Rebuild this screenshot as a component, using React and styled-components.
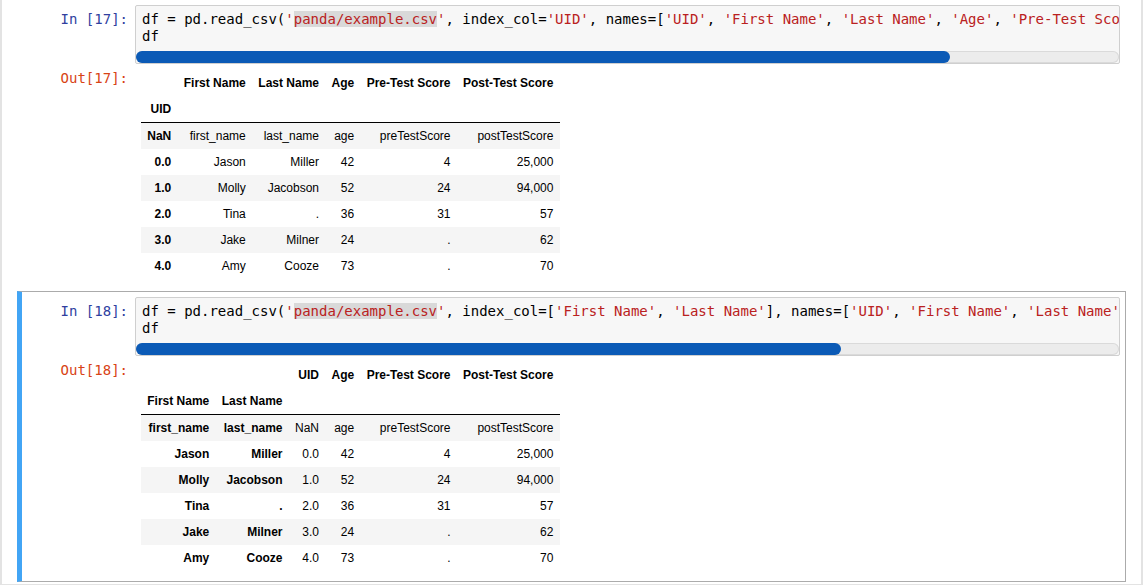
import React from 'react';
import styled, { createGlobalStyle } from 'styled-components';

const GlobalStyle = createGlobalStyle`
  html, body {
    margin: 0;
    padding: 0;
    background: #e3e3e3;
    overflow: hidden;
  }
`;

const Notebook = styled.div`
  margin-left: 2px;
  width: 1139px;
  min-height: 100vh;
  background: #fff;
  padding: 0 15px;
  box-sizing: border-box;
`;

const Cell = styled.div`
  border: 1px solid ${(props) => (props.selected ? '#ababab' : 'transparent')};
  border-left: 5px solid ${(props) => (props.selected ? '#42a5f5' : 'transparent')};
  padding: 5px;
  margin-top: ${(props) => (props.first ? '-1px' : '1px')};
`;

const Row = styled.div`
  display: flex;
  align-items: flex-start;
`;

const Prompt = styled.div`
  flex: 0 0 108px;
  box-sizing: border-box;
  padding: 6px 7px 0 0;
  text-align: right;
  font-family: "DejaVu Sans Mono", monospace;
  font-size: 14px;
  line-height: 17px;
  color: ${(props) => (props.out ? '#d84315' : '#303f9f')};
  white-space: pre;
`;

const CodeBox = styled.div`
  flex: 1;
  min-width: 0;
  border: 1px solid #cfcfcf;
  border-radius: 2px;
  background: #f7f7f7;
  overflow: hidden;
`;

const CodeLines = styled.div`
  padding: 5px 6px 6px 6px;
  font-family: "DejaVu Sans Mono", monospace;
  font-size: 14px;
  line-height: 17px;
  color: #000;
  white-space: pre;
`;

const Str = styled.span`
  color: #ba2121;
  background: ${(props) => (props.hl ? '#d9d9d9' : 'transparent')};
`;

const Track = styled.div`
  height: 12px;
  background: #ececec;
  border-radius: 6px;
  box-shadow: inset 0 0 0 1px #dadada;
`;

const Thumb = styled.div`
  height: 100%;
  background: #0b5ab6;
  border-radius: 6px;
`;

const OutArea = styled.div`
  flex: 1;
  padding: 6px 0 5px 6px;
`;

const Table = styled.table`
  border-collapse: collapse;
  border-spacing: 0;
  font-family: "Liberation Sans", Arial, sans-serif;
  font-size: 12px;
  color: #000;

  thead {
    border-bottom: 1px solid #000;
  }
  tbody tr:nth-child(odd) {
    background: #f5f5f5;
  }
  th, td {
    padding: 6px 6.25px;
    text-align: right;
    vertical-align: middle;
    line-height: normal;
    white-space: nowrap;
  }
  th {
    font-weight: bold;
  }
  td {
    font-weight: normal;
  }
`;

const renderCode = (line) =>
  line.split(/('[^']*')/).map((part, i) => {
    if (!part.startsWith("'")) return <span key={i}>{part}</span>;
    if (part === "'panda/example.csv'") {
      return (
        <Str key={i}>
          '<Str hl>panda/example.csv</Str>'
        </Str>
      );
    }
    return <Str key={i}>{part}</Str>;
  });

const DataTable = ({ head, body, indexCols }) => (
  <Table>
    <thead>
      {head.map((row, r) => (
        <tr key={r}>
          {row.map((c, i) => (
            <th key={i}>{c}</th>
          ))}
        </tr>
      ))}
    </thead>
    <tbody>
      {body.map((row, r) => (
        <tr key={r}>
          {row.map((c, i) => (i < indexCols ? <th key={i}>{c}</th> : <td key={i}>{c}</td>))}
        </tr>
      ))}
    </tbody>
  </Table>
);

const rows = [
  ['Jason', 'Miller', '0.0', '42', '4', '25,000'],
  ['Molly', 'Jacobson', '1.0', '52', '24', '94,000'],
  ['Tina', '.', '2.0', '36', '31', '57'],
  ['Jake', 'Milner', '3.0', '24', '.', '62'],
  ['Amy', 'Cooze', '4.0', '73', '.', '70'],
];

const cells = [
  {
    n: 17,
    code: [
      "df = pd.read_csv('panda/example.csv', index_col='UID', names=['UID', 'First Name', 'Last Name', 'Age', 'Pre-Test Score', 'Post-Test Score'])",
      'df',
    ],
    thumb: 82.8,
    table: {
      indexCols: 1,
      head: [
        ['', 'First Name', 'Last Name', 'Age', 'Pre-Test Score', 'Post-Test Score'],
        ['UID', '', '', '', '', ''],
      ],
      body: [
        ['NaN', 'first_name', 'last_name', 'age', 'preTestScore', 'postTestScore'],
        ...rows.map((r) => [r[2], r[0], r[1], r[3], r[4], r[5]]),
      ],
    },
  },
  {
    n: 18,
    selected: true,
    code: [
      "df = pd.read_csv('panda/example.csv', index_col=['First Name', 'Last Name'], names=['UID', 'First Name', 'Last Name', 'Age', 'Pre-Test Score', 'Post-Test Score'])",
      'df',
    ],
    thumb: 71.7,
    table: {
      indexCols: 2,
      head: [
        ['', '', 'UID', 'Age', 'Pre-Test Score', 'Post-Test Score'],
        ['First Name', 'Last Name', '', '', '', ''],
      ],
      body: [['first_name', 'last_name', 'NaN', 'age', 'preTestScore', 'postTestScore'], ...rows],
    },
  },
];

const App = () => (
  <>
    <GlobalStyle />
    <Notebook>
      {cells.map((cell, idx) => (
        <Cell key={cell.n} selected={cell.selected} first={idx === 0}>
          <Row>
            <Prompt>{`In [${cell.n}]:`}</Prompt>
            <CodeBox>
              <CodeLines>
                {cell.code.map((line, i) => (
                  <div key={i}>{renderCode(line)}</div>
                ))}
              </CodeLines>
              <Track>
                <Thumb style={{ width: `${cell.thumb}%` }} />
              </Track>
            </CodeBox>
          </Row>
          <Row>
            <Prompt out>{`Out[${cell.n}]:`}</Prompt>
            <OutArea>
              <DataTable {...cell.table} />
            </OutArea>
          </Row>
        </Cell>
      ))}
    </Notebook>
  </>
);

export default App;
